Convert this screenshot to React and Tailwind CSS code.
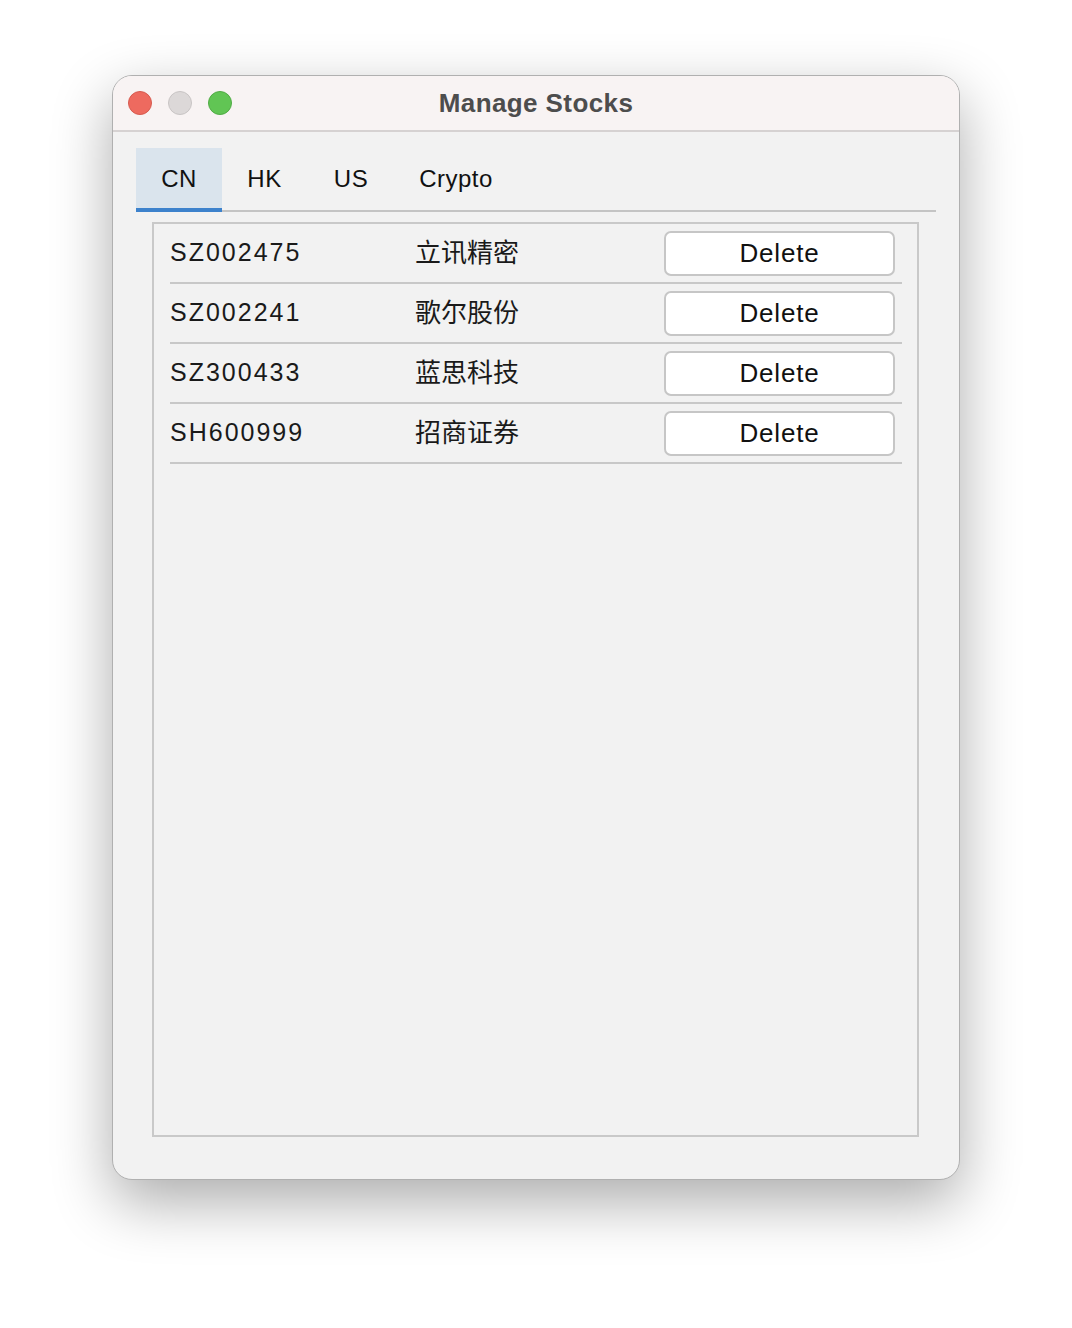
const stocks = [
  { code: 'SZ002475', name: '立讯精密' },
  { code: 'SZ002241', name: '歌尔股份' },
  { code: 'SZ300433', name: '蓝思科技' },
  { code: 'SH600999', name: '招商证券' },
];

const tabs = [
  { label: 'CN', width: 'w-[86px]' },
  { label: 'HK', width: 'w-[85px]' },
  { label: 'US', width: 'w-[88px]' },
  { label: 'Crypto', width: 'w-[122px]' },
];

const font = { fontFamily: '"Liberation Sans", "Noto Sans CJK SC", sans-serif' };

export default function App() {
  return (
    <div className="min-h-screen bg-white pt-[75px] pl-[112px]" style={font}>
      <div className="w-[848px] h-[1105px] rounded-[20px] border border-[#b0b0b0] bg-[#f2f2f2] shadow-[0_22px_60px_rgba(0,0,0,0.33)] overflow-hidden flex flex-col">
        {/* Title bar */}
        <div className="relative h-[56px] shrink-0 bg-[#f8f3f3] border-b-2 border-[#d6d2d2] flex items-center">
          <div className="flex items-center gap-4 pl-[15px]">
            <span className="w-6 h-6 rounded-full bg-[#ee6a5f] border border-[#d65a4f]" />
            <span className="w-6 h-6 rounded-full bg-[#dcd8d8] border border-[#c8c4c4]" />
            <span className="w-6 h-6 rounded-full bg-[#61c554] border border-[#51ab45]" />
          </div>
          <div className="absolute inset-0 flex items-center justify-center pointer-events-none">
            <span className="text-[26px] font-bold tracking-[0.4px] text-[#4d4d4d]">Manage Stocks</span>
          </div>
        </div>

        {/* Tabs */}
        <div className="ml-[23px] mr-[23px] mt-[16px] flex border-b-2 border-[#c4c4c4]">
          {tabs.map((t, i) => (
            <div
              key={t.label}
              className={`relative h-[62px] ${t.width} flex items-center justify-center text-[24px] tracking-[0.5px] text-[#111] ${
                i === 0 ? 'bg-[#dae4ed]' : ''
              }`}
            >
              {t.label}
              {i === 0 && <span className="absolute left-0 right-0 -bottom-[2px] h-1 bg-[#3d82cc]" />}
            </div>
          ))}
        </div>

        {/* Stock list panel */}
        <div className="ml-[39px] mr-[40px] mt-[10px] mb-[42px] flex-1 border-2 border-[#c9c9c9] pl-4 pr-[15px]">
          {stocks.map((s) => (
            <div key={s.code} className="h-[60px] flex items-center border-b-2 border-[#c8c8c8]">
              <span className="w-[245px] text-[25px] tracking-[2px] text-[#1a1a1a]">{s.code}</span>
              <span className="flex-1 text-[26px] text-[#1a1a1a]">{s.name}</span>
              <button className="mr-[7px] w-[231px] h-[45px] rounded-[7px] bg-white border-2 border-[#c6c6c6] text-[26px] tracking-[0.8px] text-[#111]">
                Delete
              </button>
            </div>
          ))}
        </div>
      </div>
    </div>
  );
}
